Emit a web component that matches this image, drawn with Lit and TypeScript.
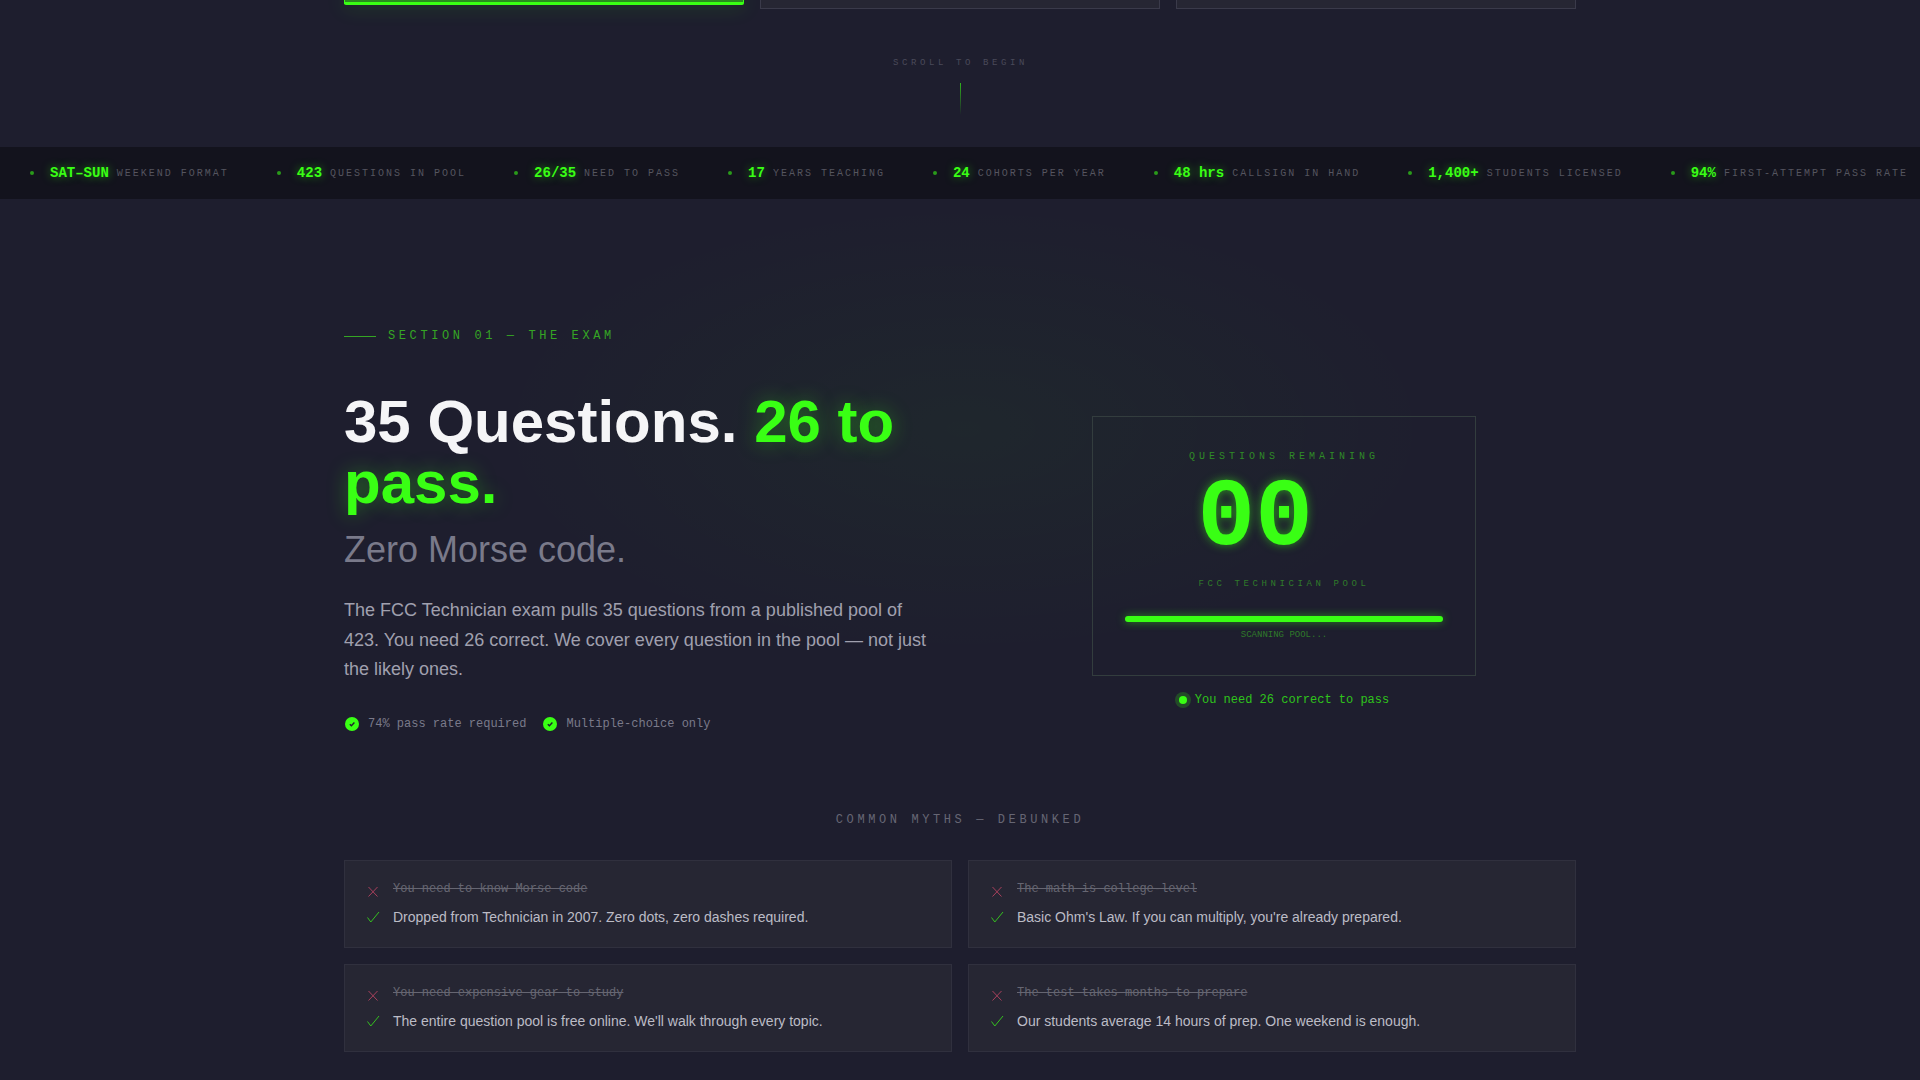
import { LitElement, html, css, svg } from "lit";
import { customElement } from "lit/decorators.js";

const ticker: [string, string][] = [
  ["SAT–SUN", "WEEKEND FORMAT"],
  ["423", "QUESTIONS IN POOL"],
  ["26/35", "NEED TO PASS"],
  ["17", "YEARS TEACHING"],
  ["24", "COHORTS PER YEAR"],
  ["48 hrs", "CALLSIGN IN HAND"],
  ["1,400+", "STUDENTS LICENSED"],
  ["94%", "FIRST-ATTEMPT PASS RATE"],
];

const myths: [string, string][] = [
  ["You need to know Morse code", "Dropped from Technician in 2007. Zero dots, zero dashes required."],
  ["The math is college-level", "Basic Ohm's Law. If you can multiply, you're already prepared."],
  ["You need expensive gear to study", "The entire question pool is free online. We'll walk through every topic."],
  ["The test takes months to prepare", "Our students average 14 hours of prep. One weekend is enough."],
];

const xIcon = svg`<path d="M1.5 5 L10.5 14.5 M10.5 5 L1.5 14.5" fill="none" stroke="#a8405c" stroke-width="1" />`;
const checkIcon = svg`<path d="M0.5 7.5 L3.8 12 L12 2" fill="none" stroke="#35c020" stroke-width="1" />`;

@customElement("app-root")
export class AppRoot extends LitElement {
  static styles = css`
    :host { display: block; background: #1e1e2e; color: #fff; font-family: "Liberation Sans", Arial, sans-serif; height: 1080px; overflow: hidden; }
    .mono { font-family: "Liberation Mono", "Courier New", monospace; }
    .hero { height: 147px; display: flex; flex-direction: column; align-items: center; }
    .tabs { width: 1232px; display: grid; grid-template-columns: repeat(3, 1fr); gap: 16px; align-items: start; }
    .tab { height: 9px; box-sizing: border-box; background: #262633; border: 1px solid #3a3a4a; border-top: 0; }
    .tab.on { height: 5px; background: #2a8a1f; border: 1px solid #39ff14; border-top: 0; border-bottom-width: 3px; border-radius: 0 0 2px 2px; box-shadow: 0 0 20px rgba(57,255,20,.3); }
    .scroll { margin-top: 49px; font-size: 9px; letter-spacing: 3.6px; color: #4a4a5a; line-height: 11px; padding-left: 1px; }
    .scroll-line { margin-top: 14px; width: 1px; height: 32px; background: linear-gradient(#39ff14aa, #39ff1400); }
    .ticker { height: 52px; background: #13131d; display: flex; align-items: center; padding-left: 30px; white-space: nowrap; overflow: hidden; box-sizing: border-box; }
    .tick { display: flex; align-items: center; margin-right: 48px; flex: none; }
    .tick i { width: 4px; height: 4px; border-radius: 50%; background: #2a9a1a; margin-right: 16px; }
    .tick b { font-size: 14px; color: #39ff14; text-shadow: 0 0 8px rgba(57,255,20,.5); margin-right: 8px; }
    .tick span { font-size: 10px; letter-spacing: 2px; color: #55555f; }
    .main { position: relative; width: 1232px; margin: 0 auto; padding-top: 130px; }
    .glow { position: absolute; left: 140px; top: 0; width: 960px; height: 460px; background: radial-gradient(ellipse at center, rgba(57,255,20,.04), rgba(57,255,20,0) 70%); pointer-events: none; }
    .label { position: relative; display: flex; align-items: center; gap: 12px; font-size: 12px; letter-spacing: 3.6px; color: #35a524; line-height: 14px; }
    .label::before { content: ""; width: 32px; height: 1px; background: #35a524; }
    .cols { position: relative; display: grid; grid-template-columns: 1fr 1fr; gap: 64px; margin-top: 48px; align-items: center; }
    h1 { margin: 0; font-size: 60px; line-height: 61px; font-weight: 700; color: #f5f5f7; }
    h1 em { font-style: normal; color: #39ff14; text-shadow: 0 0 20px rgba(57,255,20,.35); }
    .sub { font-size: 36px; line-height: 44px; color: #7a7a8a; margin-top: 15px; }
    .para { margin: 24px 0 0; font-size: 18px; line-height: 29.7px; color: #a0a0ae; }
    .chips { display: flex; gap: 16px; margin-top: 31px; font-size: 12px; color: #7a7a8a; }
    .chip { display: flex; align-items: center; gap: 8px; }
    .chip svg { display: block; }
    .right { display: flex; flex-direction: column; align-items: center; }
    .card { width: 384px; height: 260px; box-sizing: border-box; border: 1px solid #333d3e; padding: 34px 32px 32px; display: flex; flex-direction: column; align-items: center; }
    .c1 { font-size: 10px; letter-spacing: 4px; color: #2f8a26; line-height: 12px; }
    .num { width: 3ch; font-size: 96px; line-height: 96px; font-weight: 700; color: #39ff14; text-shadow: 0 0 10px rgba(57,255,20,.5); margin-top: 8.5px; }
    .c2 { font-size: 9px; letter-spacing: 3.6px; color: #2f7a2a; line-height: 11px; margin-top: 11.5px; }
    .bar { width: 100%; height: 6px; border-radius: 3px; background: #39ff14; box-shadow: 0 0 8px rgba(57,255,20,.5); margin-top: 26px; flex: none; }
    .c3 { font-size: 9px; color: #2f7a2a; line-height: 10px; margin-top: 8px; }
    .need { display: flex; align-items: center; gap: 8px; margin-top: 16px; font-size: 12px; color: #2fc41b; line-height: 16px; }
    .need i { width: 8px; height: 8px; border-radius: 50%; background: #39ff14; box-shadow: 0 0 0 4px rgba(57,255,20,.2); }
    .myth-title { text-align: center; font-size: 12px; letter-spacing: 3.6px; color: #666674; line-height: 14px; margin-top: 81px; }
    .grid { display: grid; grid-template-columns: 1fr 1fr; gap: 16px; margin-top: 33px; }
    .myth { height: 88px; box-sizing: border-box; background: #262633; border: 1px solid #30303e; padding: 20px 22px; display: flex; flex-direction: column; gap: 10px; }
    .row { display: flex; align-items: center; gap: 12px; }
    .row svg { flex: none; display: block; overflow: visible; }
    .row s { font-size: 12px; color: #666672; line-height: 16px; }
    .row span { font-size: 14px; color: #bcbcc6; line-height: 20px; }
  `;

  render() {
    return html`
      <section class="hero">
        <div class="tabs"><div class="tab on"></div><div class="tab"></div><div class="tab"></div></div>
        <div class="scroll mono">SCROLL TO BEGIN</div>
        <div class="scroll-line"></div>
      </section>
      <div class="ticker mono">
        ${ticker.map(([a, b]) => html`<div class="tick"><i></i><b>${a}</b><span>${b}</span></div>`)}
      </div>
      <main class="main">
        <div class="glow"></div>
        <div class="label mono">SECTION 01 — THE EXAM</div>
        <div class="cols">
          <div>
            <h1>35 Questions. <em>26 to pass.</em></h1>
            <div class="sub">Zero Morse code.</div>
            <p class="para">The FCC Technician exam pulls 35 questions from a published pool of 423. You need 26 correct. We cover every question in the pool — not just the likely ones.</p>
            <div class="chips mono">
              ${["74% pass rate required", "Multiple-choice only"].map(
                (t) => html`<div class="chip"><svg width="16" height="16" viewBox="0 0 16 16"><circle cx="8" cy="8" r="7" fill="#39ff14"/><path d="M5.8 8.2 L7.4 9.8 L10.4 6.5" fill="none" stroke="#1e1e2e" stroke-width="1.4"/></svg><span>${t}</span></div>`
              )}
            </div>
          </div>
          <div class="right">
            <div class="card mono">
              <div class="c1">QUESTIONS REMAINING</div>
              <div class="num">00</div>
              <div class="c2">FCC TECHNICIAN POOL</div>
              <div class="bar"></div>
              <div class="c3">SCANNING POOL...</div>
            </div>
            <div class="need mono"><i></i><span>You need 26 correct to pass</span></div>
          </div>
        </div>
        <div class="myth-title mono">COMMON MYTHS — DEBUNKED</div>
        <div class="grid">
          ${myths.map(
            ([a, b]) => html`<div class="myth">
              <div class="row"><svg width="14" height="14" viewBox="0 0 14 14">${xIcon}</svg><s class="mono">${a}</s></div>
              <div class="row"><svg width="14" height="14" viewBox="0 0 14 14">${checkIcon}</svg><span>${b}</span></div>
            </div>`
          )}
        </div>
      </main>
    `;
  }
}
